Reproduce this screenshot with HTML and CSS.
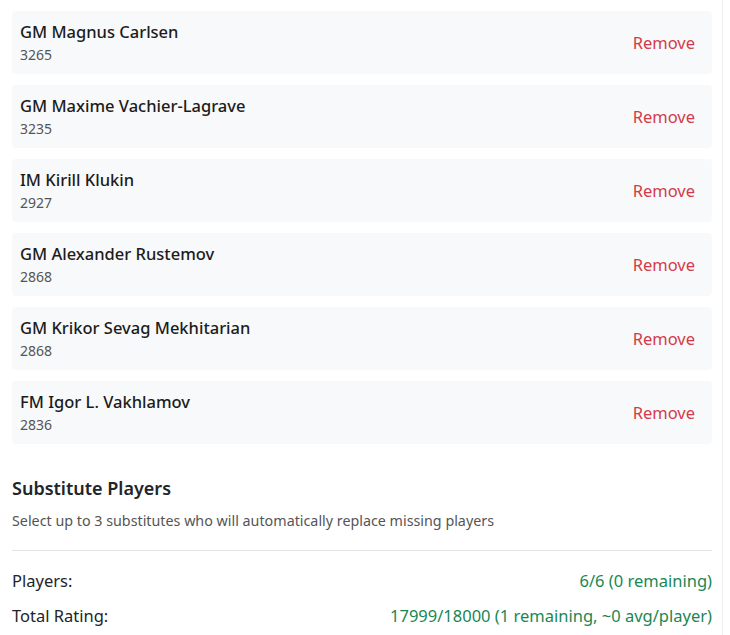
FILE: index.html
```html
<!DOCTYPE html>
<html>
<head>
<meta charset="utf-8">
<link rel="stylesheet" href="styles.css">
</head>
<body>
<div class="panel">
  <div class="list">
    <div class="row"><div class="info"><div class="name">GM Magnus Carlsen</div><div class="rating">3265</div></div><span class="remove">Remove</span></div>
    <div class="row"><div class="info"><div class="name">GM Maxime Vachier-Lagrave</div><div class="rating">3235</div></div><span class="remove">Remove</span></div>
    <div class="row"><div class="info"><div class="name">IM Kirill Klukin</div><div class="rating">2927</div></div><span class="remove">Remove</span></div>
    <div class="row"><div class="info"><div class="name">GM Alexander Rustemov</div><div class="rating">2868</div></div><span class="remove">Remove</span></div>
    <div class="row"><div class="info"><div class="name">GM Krikor Sevag Mekhitarian</div><div class="rating">2868</div></div><span class="remove">Remove</span></div>
    <div class="row"><div class="info"><div class="name">FM Igor L. Vakhlamov</div><div class="rating">2836</div></div><span class="remove">Remove</span></div>
  </div>
  <h3 class="title">Substitute Players</h3>
  <p class="sub">Select up to 3 substitutes who will automatically replace missing players</p>
  <div class="summary">
    <div class="line"><span>Players:</span><span class="ok">6/6 (0 remaining)</span></div>
    <div class="line"><span>Total Rating:</span><span class="ok">17999/18000 (1 remaining, ~0 avg/player)</span></div>
  </div>
</div>
</body>
</html>
```
FILE: styles.css
```css
html, body { margin: 0; padding: 0; background: #fff; }
body { font-family: "Noto Sans", "Open Sans", sans-serif; color: #212529; }
.panel { width: 723px; border-right: 1px solid #eceef0; box-sizing: border-box; padding: 11px 10px 0 12px; height: 635px; overflow: hidden; }
.list { display: flex; flex-direction: column; gap: 11px; width: 700px; }
.row { display: flex; align-items: center; justify-content: space-between; background: #f8f9fa; border-radius: 4px; height: 63px; padding: 0 17px 0 8px; box-sizing: border-box; }
.info { margin-top: -1px; }
.name { font-size: 16.5px; line-height: 22px; font-weight: 500; color: #1c1c1c; }
.rating { font-size: 14px; line-height: 18px; color: #555; margin-top: 3px; }
.remove { color: #d43a48; font-size: 16.5px; }
.title { margin: 32px 0 0 0; font-size: 18px; line-height: 24px; font-weight: 600; color: #212529; }
.sub { margin: 12px 0 0 0; font-size: 14.3px; line-height: 18px; color: #555; }
.summary { width: 700px; border-top: 1px solid #e2e5e8; margin-top: 20px; padding-top: 19px; }
.line { display: flex; justify-content: space-between; font-size: 16.5px; line-height: 22px; height: 35px; color: #212529; }
.ok { color: #198754; }
```
